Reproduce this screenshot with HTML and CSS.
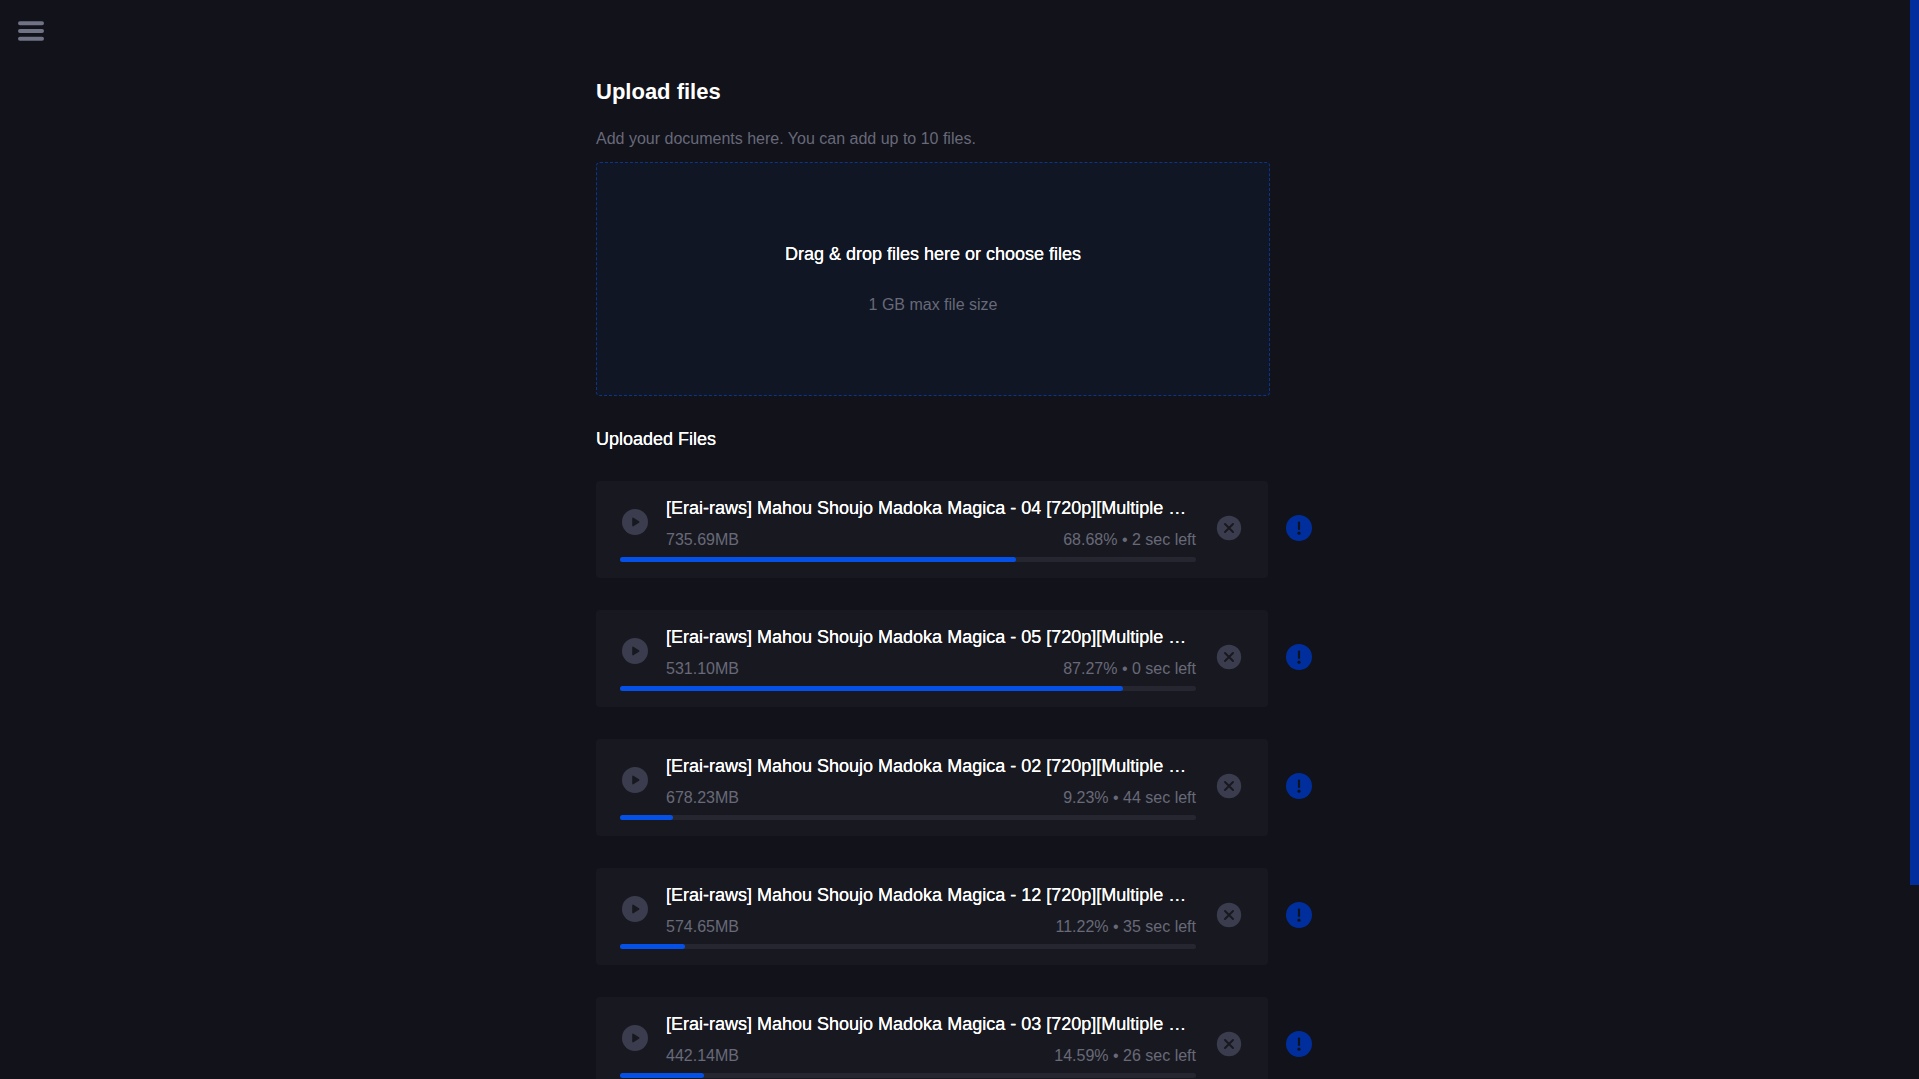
FILE: index.html
```
<!DOCTYPE html>
<html lang="en">
<head>
<meta charset="utf-8">
<meta name="viewport" content="width=device-width, initial-scale=1">
<title>Upload files</title>
<link rel="stylesheet" href="styles.css">
</head>
<body>
<svg class="sprite" aria-hidden="true">
  <symbol id="play" viewBox="0 0 30 30"><circle cx="15" cy="15" r="13" fill="#3b3d4e"/><path d="M13 11.4l5.6 3.6-5.6 3.6z" fill="#181920" stroke="#181920" stroke-width="1.6" stroke-linejoin="round"/></symbol>
  <symbol id="close" viewBox="0 0 30 30"><circle cx="15" cy="15" r="12.2" fill="#3b3d4e"/><path d="M11 11l8 8M19 11l-8 8" fill="none" stroke="#181920" stroke-width="2" stroke-linecap="round"/></symbol>
  <symbol id="alert" viewBox="0 0 26 26"><circle cx="13" cy="13" r="13" fill="#002f9d"/><path d="M13 7.5v6.5" fill="none" stroke="#11121a" stroke-width="2.2" stroke-linecap="round"/><circle cx="13" cy="18.2" r="1.6" fill="#11121a"/></symbol>
</svg>
<div class="page">
  <button class="menu" type="button" aria-label="Open menu">
    <svg viewBox="0 0 26 20" aria-hidden="true"><path d="M2 2.3h22M2 10h22M2 17.7h22" stroke="#707286" stroke-width="4" stroke-linecap="round"/></svg>
  </button>
  <main class="content">
    <h1 class="title">Upload files</h1>
    <p class="lead">Add your documents here. You can add up to 10 files.</p>
    <button class="dropzone" type="button">
      <span class="strong">Drag &amp; drop files here or choose files</span>
      <span class="muted">1 GB max file size</span>
    </button>
    <h2 class="subtitle strong">Uploaded Files</h2>
    <ul class="files">
      <li class="row">
        <article class="card">
          <div class="file">
            <button class="icon-button" type="button" aria-label="Resume upload"><svg><use href="#play"/></svg></button>
            <div class="details">
              <h3 class="name strong">[Erai-raws] Mahou Shoujo Madoka Magica - 04 [720p][Multiple …</h3>
              <p class="meta"><span>735.69MB</span><span>68.68% • 2 sec left</span></p>
            </div>
            <div class="track"><div class="fill" style="width:68.68%"></div></div>
          </div>
          <button class="icon-button" type="button" aria-label="Cancel upload"><svg><use href="#close"/></svg></button>
        </article>
        <button class="alert" type="button" aria-label="Upload details"><svg><use href="#alert"/></svg></button>
      </li>
      <li class="row">
        <article class="card">
          <div class="file">
            <button class="icon-button" type="button" aria-label="Resume upload"><svg><use href="#play"/></svg></button>
            <div class="details">
              <h3 class="name strong">[Erai-raws] Mahou Shoujo Madoka Magica - 05 [720p][Multiple …</h3>
              <p class="meta"><span>531.10MB</span><span>87.27% • 0 sec left</span></p>
            </div>
            <div class="track"><div class="fill" style="width:87.27%"></div></div>
          </div>
          <button class="icon-button" type="button" aria-label="Cancel upload"><svg><use href="#close"/></svg></button>
        </article>
        <button class="alert" type="button" aria-label="Upload details"><svg><use href="#alert"/></svg></button>
      </li>
      <li class="row">
        <article class="card">
          <div class="file">
            <button class="icon-button" type="button" aria-label="Resume upload"><svg><use href="#play"/></svg></button>
            <div class="details">
              <h3 class="name strong">[Erai-raws] Mahou Shoujo Madoka Magica - 02 [720p][Multiple …</h3>
              <p class="meta"><span>678.23MB</span><span>9.23% • 44 sec left</span></p>
            </div>
            <div class="track"><div class="fill" style="width:9.23%"></div></div>
          </div>
          <button class="icon-button" type="button" aria-label="Cancel upload"><svg><use href="#close"/></svg></button>
        </article>
        <button class="alert" type="button" aria-label="Upload details"><svg><use href="#alert"/></svg></button>
      </li>
      <li class="row">
        <article class="card">
          <div class="file">
            <button class="icon-button" type="button" aria-label="Resume upload"><svg><use href="#play"/></svg></button>
            <div class="details">
              <h3 class="name strong">[Erai-raws] Mahou Shoujo Madoka Magica - 12 [720p][Multiple …</h3>
              <p class="meta"><span>574.65MB</span><span>11.22% • 35 sec left</span></p>
            </div>
            <div class="track"><div class="fill" style="width:11.22%"></div></div>
          </div>
          <button class="icon-button" type="button" aria-label="Cancel upload"><svg><use href="#close"/></svg></button>
        </article>
        <button class="alert" type="button" aria-label="Upload details"><svg><use href="#alert"/></svg></button>
      </li>
      <li class="row">
        <article class="card">
          <div class="file">
            <button class="icon-button" type="button" aria-label="Resume upload"><svg><use href="#play"/></svg></button>
            <div class="details">
              <h3 class="name strong">[Erai-raws] Mahou Shoujo Madoka Magica - 03 [720p][Multiple …</h3>
              <p class="meta"><span>442.14MB</span><span>14.59% • 26 sec left</span></p>
            </div>
            <div class="track"><div class="fill" style="width:14.59%"></div></div>
          </div>
          <button class="icon-button" type="button" aria-label="Cancel upload"><svg><use href="#close"/></svg></button>
        </article>
        <button class="alert" type="button" aria-label="Upload details"><svg><use href="#alert"/></svg></button>
      </li>
    </ul>
  </main>
</div>
<div class="scrollbar" aria-hidden="true"><div class="thumb"></div></div>
</body>
</html>
```
FILE: styles.css
```
* {
  box-sizing: border-box;
}

body {
  display: flex;
  height: 100vh;
  margin: 0;
  background: #11121a;
  color: #fff;
  font: 16px/20px "Liberation Sans", Arial, sans-serif;
}

h1, h2, h3, p, ul {
  margin: 0;
  padding: 0;
}

button {
  padding: 0;
  border: 0;
  background: none;
  color: inherit;
  font: inherit;
  cursor: pointer;
}

svg {
  display: block;
  width: 100%;
  height: 100%;
}

.sprite {
  display: none;
}

.page {
  flex: 1;
  min-width: 0;
  overflow-y: auto;
  scrollbar-width: none;
}

.scrollbar {
  flex: none;
  width: 9px;
}

.thumb {
  height: 82%;
  background: #002f9d;
}

.menu {
  display: block;
  width: 26px;
  height: 20px;
  margin: 21px 18px 0;
}

.content {
  max-width: 718px;
  margin: 0 auto;
  padding: 37px 0 222px;
}

.title {
  font-size: 22px;
  line-height: 28px;
}

.lead {
  margin-top: 23px;
  color: #686979;
}

.strong {
  font-size: 18px;
  font-weight: 400;
  line-height: 22px;
  text-shadow: 0 0 currentColor;
}

.muted {
  color: #686979;
}

.dropzone {
  display: flex;
  flex-direction: column;
  align-items: center;
  justify-content: center;
  gap: 30px;
  width: 100%;
  max-width: 674px;
  min-height: 234px;
  margin-top: 13px;
  border: 1px dashed #0b358a;
  border-radius: 4px;
  background: #101623;
}

.subtitle {
  margin-top: 32px;
}

.files {
  display: grid;
  gap: 32px;
  margin-top: 31px;
  list-style: none;
}

.row {
  display: flex;
  align-items: center;
  gap: 18px;
}

.card {
  display: flex;
  flex: 0 1 672px;
  align-items: center;
  gap: 18px;
  min-width: 0;
  padding: 16px 24px;
  border-radius: 4px;
  background: #181920;
}

.file {
  display: grid;
  flex: 1;
  grid-template-columns: 30px minmax(0, 1fr);
  align-items: center;
  column-gap: 16px;
  row-gap: 7px;
  min-width: 0;
}

.icon-button {
  flex: none;
  width: 30px;
  height: 34px;
  padding-bottom: 4px;
}

.details {
  display: grid;
  gap: 11px;
  min-width: 0;
}

.name {
  overflow: hidden;
  text-overflow: ellipsis;
  white-space: nowrap;
}

.meta {
  display: flex;
  justify-content: space-between;
  color: #686979;
}

.track {
  grid-column: 1 / -1;
  height: 5px;
  border-radius: 3px;
  background: #252630;
}

.fill {
  height: 100%;
  border-radius: 3px;
  background: #0550e6;
}

.alert {
  flex: none;
  width: 26px;
  height: 30px;
  padding-bottom: 4px;
}
```
